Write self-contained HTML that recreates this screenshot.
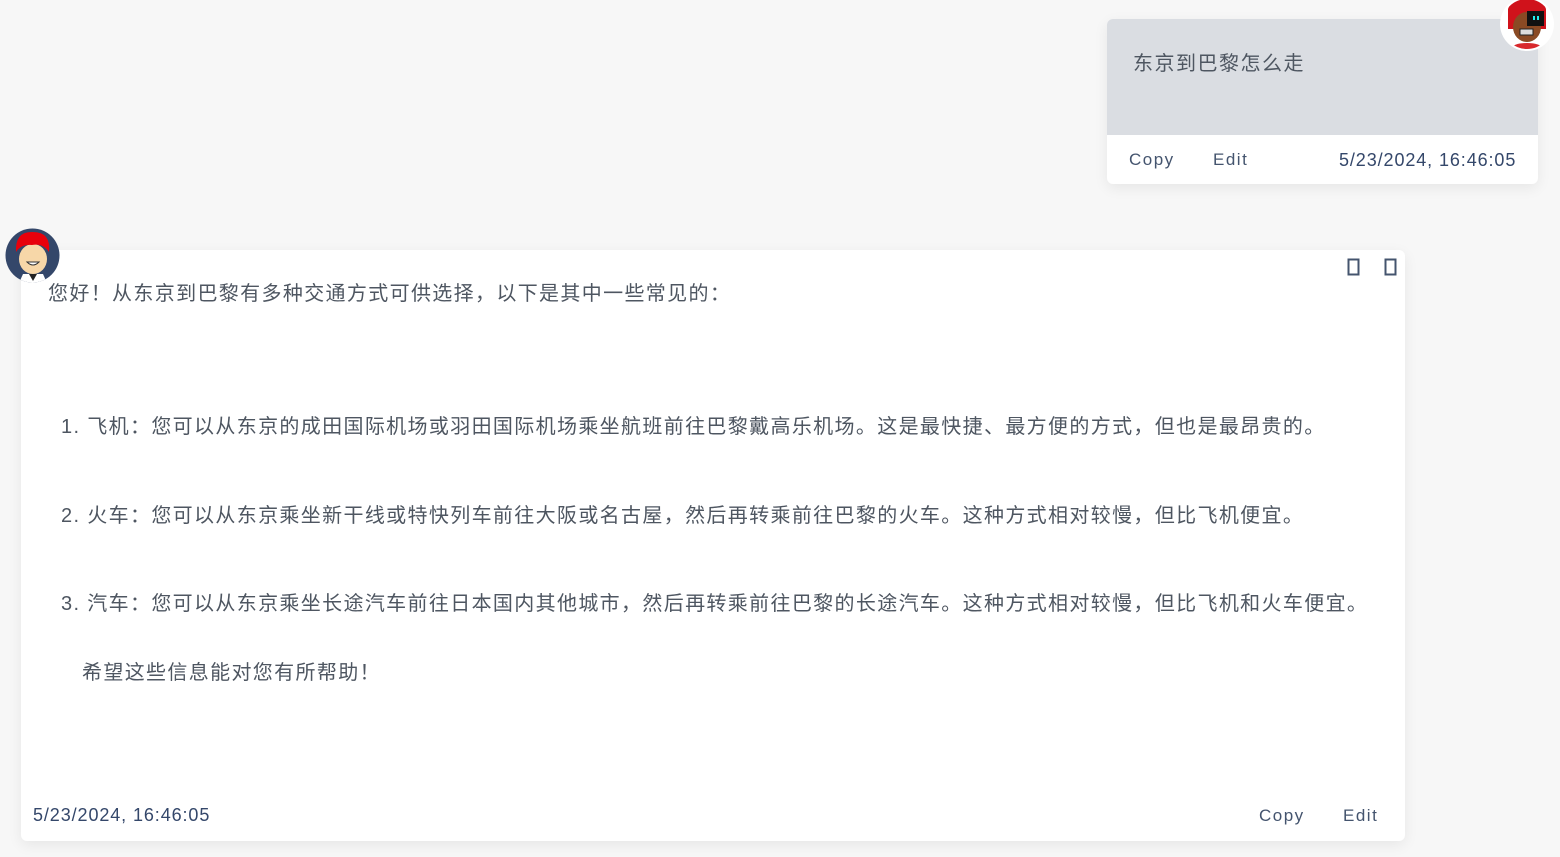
<!DOCTYPE html>
<html><head><meta charset="utf-8"><style>
*{margin:0;padding:0;box-sizing:border-box}
body{width:1560px;height:857px;background:#f7f7f7;font-family:"Liberation Sans","Noto Sans CJK SC",sans-serif;position:relative;overflow:hidden;color:#4e5661}
.ab{position:absolute;white-space:nowrap}
.card{position:absolute;background:#fff;border-radius:6px;box-shadow:0 4px 14px rgba(0,0,0,.07)}
.ts{color:#34476a;font-size:18px;letter-spacing:0.9px}
.btn{color:#44546e;font-size:17px;letter-spacing:1.5px}
.t{font-size:20px;letter-spacing:1.35px}
</style></head><body>
<div class="card" style="left:1107px;top:19px;width:431px;height:165px;overflow:hidden">
<div style="height:116px;background:#dadde2"></div>
</div>
<div class="ab t" style="left:1133px;top:47px;letter-spacing:1.5px">东京到巴黎怎么走</div>
<div class="ab btn" style="left:1129px;top:150px">Copy</div>
<div class="ab btn" style="left:1213px;top:150px">Edit</div>
<div class="ab ts" style="left:1339px;top:150px">5/23/2024, 16:46:05</div>
<svg class="ab" style="left:1500px;top:-3px" width="54" height="54" viewBox="0 0 54 54">
<circle cx="27" cy="27" r="27" fill="#fff"/>
<clipPath id="c1"><circle cx="27" cy="27" r="25"/></clipPath>
<g clip-path="url(#c1)">
<path d="M8 12 L12 2 L42 2 L46 12 L46 32 L8 32Z" fill="#d0121b"/>
<ellipse cx="27" cy="30" rx="14" ry="15" fill="#8a4a24"/>
<path d="M27 14 L44 14 L44 29 L27 29Z" fill="#111"/>
<rect x="33" y="19" width="2" height="4" fill="#2ee"/><rect x="37" y="19" width="2" height="4" fill="#2ee"/>
<rect x="20" y="32" width="13" height="6" fill="#ddd" stroke="#222"/>
<path d="M8 56 Q10 46 27 46 Q44 46 46 56Z" fill="#d8282c"/>
</g></svg>

<div class="card" style="left:21px;top:250px;width:1384px;height:591px"></div>
<svg class="ab" style="left:1347px;top:258px" width="60" height="20"><rect x="1.5" y="1.5" width="10" height="15" fill="none" stroke="#44546e" stroke-width="2"/><rect x="38.5" y="1.5" width="10" height="15" fill="none" stroke="#44546e" stroke-width="2"/></svg>
<svg class="ab" style="left:5px;top:228px" width="55" height="55" viewBox="0 0 55 55">
<circle cx="27.5" cy="27.5" r="27" fill="#34476a"/>
<clipPath id="c2"><circle cx="27.5" cy="27.5" r="27"/></clipPath>
<g clip-path="url(#c2)">
<ellipse cx="28" cy="31" rx="14" ry="15" fill="#f7d7a8"/>
<path d="M11 24 Q10 3 28 4 Q46 4 44 24 Q38 15 27 17 Q16 16 11 24Z" fill="#e8000b"/>
<path d="M22 34 Q28 40 34 34Z" fill="#fff" stroke="#333"/>
<path d="M14 55 L18 46 L38 46 L42 55Z" fill="#fff"/><path d="M24 46 L28 53 L32 46Z" fill="#222"/>
</g></svg>
<div class="ab t" style="left:48px;top:277px">您好！从东京到巴黎有多种交通方式可供选择，以下是其中一些常见的：</div>
<div class="ab t" style="left:61px;top:410px">1. 飞机：您可以从东京的成田国际机场或羽田国际机场乘坐航班前往巴黎戴高乐机场。这是最快捷、最方便的方式，但也是最昂贵的。</div>
<div class="ab t" style="left:61px;top:499px">2. 火车：您可以从东京乘坐新干线或特快列车前往大阪或名古屋，然后再转乘前往巴黎的火车。这种方式相对较慢，但比飞机便宜。</div>
<div class="ab t" style="left:61px;top:587px">3. 汽车：您可以从东京乘坐长途汽车前往日本国内其他城市，然后再转乘前往巴黎的长途汽车。这种方式相对较慢，但比飞机和火车便宜。</div>
<div class="ab t" style="left:82px;top:656px">希望这些信息能对您有所帮助！</div>
<div class="ab ts" style="left:33px;top:805px">5/23/2024, 16:46:05</div>
<div class="ab btn" style="left:1259px;top:806px">Copy</div>
<div class="ab btn" style="left:1343px;top:806px">Edit</div>
</body></html>
